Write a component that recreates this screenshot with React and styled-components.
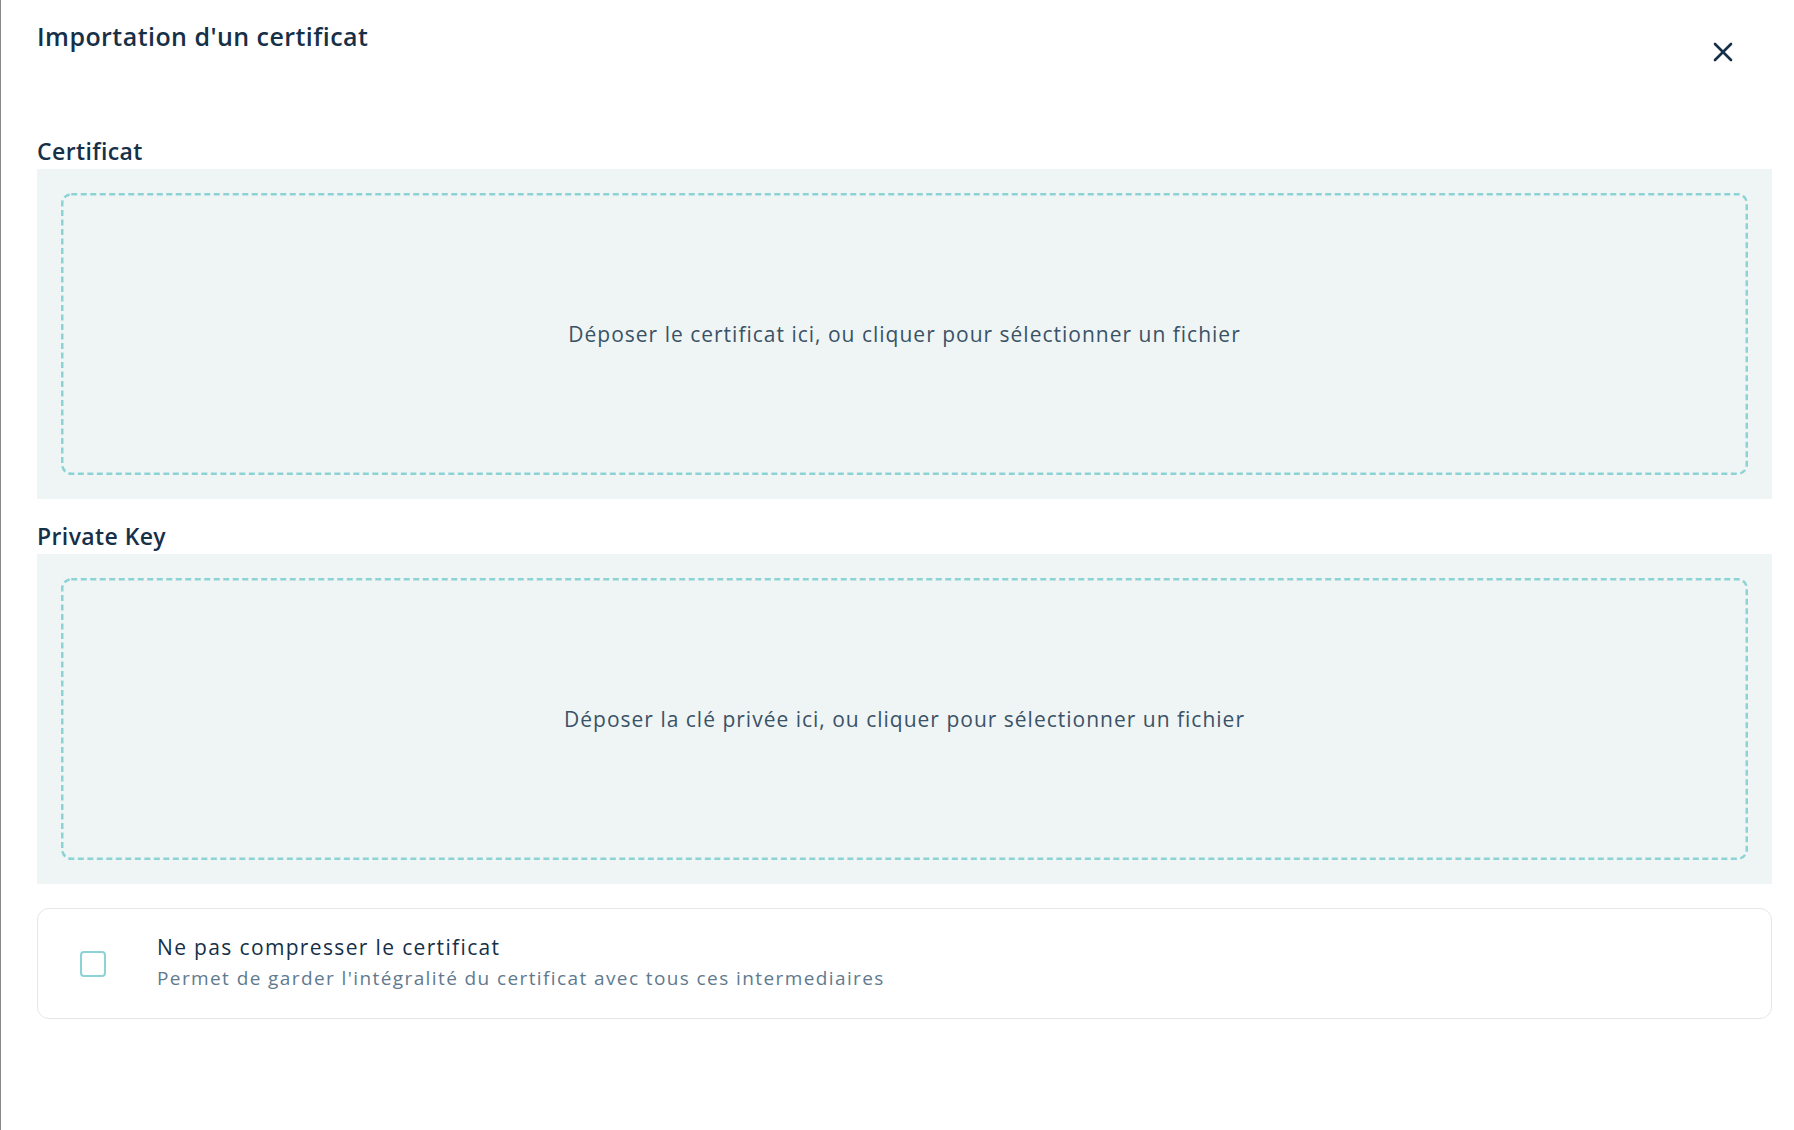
import styled, { createGlobalStyle } from "styled-components";

const GlobalStyle = createGlobalStyle`
    html, body {
        margin: 0;
        padding: 0;
        background: #ffffff;
    }
    body {
        font-family: "Open Sans", "Noto Sans", sans-serif;
        color: #163048;
    }
`

export default function App() {
    return (
        <>
            <GlobalStyle />
            <Panel>
                <Header>
                    <Title>Importation d'un certificat</Title>
                    <CloseButton aria-label="Fermer">
                        <svg width="20" height="20" viewBox="0 0 20 20" fill="none">
                            <path d="M2 2 L18 18 M18 2 L2 18" stroke="#163048" strokeWidth="2.6" strokeLinecap="round" />
                        </svg>
                    </CloseButton>
                </Header>

                <Section>
                    <Label>Certificat</Label>
                    <DropArea>
                        <DropZone>
                            <DashedFrame>
                                <rect x="1.25" y="1.25" rx="9" ry="9" />
                            </DashedFrame>
                            <DropText>Déposer le certificat ici, ou cliquer pour sélectionner un fichier</DropText>
                        </DropZone>
                    </DropArea>
                </Section>

                <Section>
                    <Label>Private Key</Label>
                    <DropArea>
                        <DropZone>
                            <DashedFrame>
                                <rect x="1.25" y="1.25" rx="9" ry="9" />
                            </DashedFrame>
                            <DropText>Déposer la clé privée ici, ou cliquer pour sélectionner un fichier</DropText>
                        </DropZone>
                    </DropArea>
                </Section>

                <OptionCard>
                    <CheckBox />
                    <OptionText>
                        <OptionTitle>Ne pas compresser le certificat</OptionTitle>
                        <OptionHint>Permet de garder l'intégralité du certificat avec tous ces intermediaires</OptionHint>
                    </OptionText>
                </OptionCard>
            </Panel>
        </>
    )
}

const Panel = styled.div`
    box-sizing: border-box;
    min-height: 100vh;
    border-left: 1px solid #8a8a8a;
    padding: 20px 22px 40px 36px;
    background: #ffffff;
`

/* Header */

const Header = styled.div`
    display: flex;
    justify-content: space-between;
    align-items: flex-start;
`

const Title = styled.h1`
    margin: 0;
    font-size: 25px;
    line-height: 32px;
    font-weight: 600;
    letter-spacing: 0.45px;
    color: #163048;
`

const CloseButton = styled.button`
    margin: 22px 39px 0 0;
    padding: 0;
    border: none;
    background: none;
    width: 20px;
    height: 20px;
    cursor: pointer;
    display: flex;
`

/* Drop zones */

const Section = styled.div`
    margin-top: 74px;

    & + & {
        margin-top: 22px;
    }
`

const Label = styled.div`
    font-size: 23px;
    line-height: 30px;
    font-weight: 600;
    letter-spacing: 0.4px;
    color: #163048;
    margin-bottom: 3px;
`

const DropArea = styled.div`
    background: #eff5f5;
    padding: 24px;
`

const DropZone = styled.div`
    position: relative;
    height: 282px;
    display: flex;
    align-items: center;
    justify-content: center;
    cursor: pointer;
`

const DashedFrame = styled.svg`
    position: absolute;
    inset: 0;
    width: 100%;
    height: 100%;
    overflow: visible;
    pointer-events: none;

    rect {
        width: calc(100% - 2.5px);
        height: calc(100% - 2.5px);
        fill: none;
        stroke: #8dd3d6;
        stroke-width: 2.5px;
        stroke-dasharray: 6 3.5;
    }
`

const DropText = styled.span`
    font-size: 21px;
    color: #3a5266;
    letter-spacing: 1px;
`

/* Option */

const OptionCard = styled.div`
    box-sizing: border-box;
    margin-top: 24px;
    height: 111px;
    border: 1px solid #e5e7e8;
    border-radius: 12px;
    display: flex;
    align-items: center;
    padding-left: 42px;
`

const CheckBox = styled.div`
    box-sizing: border-box;
    width: 26px;
    height: 26px;
    border: 2.5px solid #8dd3d6;
    border-radius: 4px;
    flex-shrink: 0;
    margin-right: 51px;
`

const OptionText = styled.div`
    display: flex;
    flex-direction: column;
    margin-top: -2px;
`

const OptionTitle = styled.div`
    font-size: 21px;
    line-height: 31px;
    font-weight: 500;
    letter-spacing: 1.35px;
    color: #163048;
`

const OptionHint = styled.div`
    font-size: 19px;
    line-height: 30px;
    letter-spacing: 1.4px;
    color: #5f7a8e;
`
